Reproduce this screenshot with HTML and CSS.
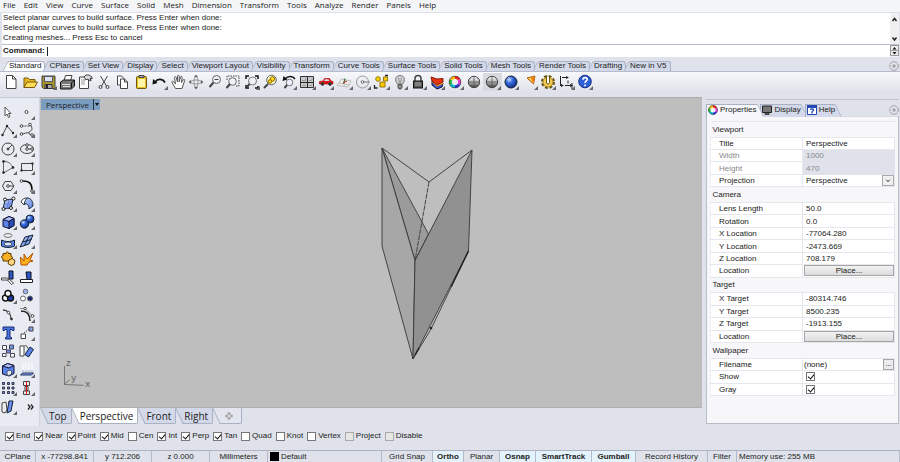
FILE: index.html
```html
<!DOCTYPE html>
<html lang="en">
<head>
<meta charset="utf-8">
<title>Modeling workspace</title>
<link rel="stylesheet" href="styles.css">
</head>
<body>
<svg class="defs" aria-hidden="true">
  <defs>
    <radialGradient id="blueBall" cx=".35" cy=".3" r=".8"><stop offset="0" stop-color="#cfe0ff"/><stop offset=".35" stop-color="#3b6fe0"/><stop offset="1" stop-color="#0a1f7a"/></radialGradient>
    <linearGradient id="grayBall" x2="0" y2="1"><stop offset="0" stop-color="#fff"/><stop offset=".5" stop-color="#b5b5b5"/><stop offset="1" stop-color="#3a3a3a"/></linearGradient>
    <linearGradient id="blueFace" x2="1" y2="1"><stop offset="0" stop-color="#c8d6fb"/><stop offset="1" stop-color="#4f77dd"/></linearGradient>
  </defs>
  <symbol id="wheel" viewBox="0 0 14 14">
    <g fill="none" stroke-width="3">
      <path stroke="#e22" d="M7 2a5 5 0 0 1 4.3 2.5"/><path stroke="#e3c" d="M11.3 4.5a5 5 0 0 1 0 5"/><path stroke="#33d" d="M11.3 9.5A5 5 0 0 1 7 12"/><path stroke="#0bc" d="M7 12a5 5 0 0 1-4.3-2.5"/><path stroke="#2b3" d="M2.700 9.5a5 5 0 0 1 0-5"/><path stroke="#fb0" d="M2.700 4.5A5 5 0 0 1 7 2"/>
    </g>
    <circle cx="7" cy="7" r="6.4" fill="none" stroke="#222" stroke-width=".7"/>
  </symbol>
  <symbol id="options" viewBox="0 0 10 10"><g fill="none" stroke="#888"><circle cx="5" cy="5" r="4.300" stroke-width=".9" stroke-dasharray="2.400 .6"/><path d="M5 3v4M3 5h4" stroke-width=".8"/></g></symbol>
</svg>

<nav class="menu" aria-label="Main menu">
  <a href="#">File</a><a href="#">Edit</a><a href="#">View</a><a href="#">Curve</a><a href="#">Surface</a><a href="#">Solid</a><a href="#">Mesh</a><a href="#">Dimension</a><a href="#">Transform</a><a href="#">Tools</a><a href="#">Analyze</a><a href="#">Render</a><a href="#">Panels</a><a href="#">Help</a>
</nav>

<section class="console">
  <div class="history">
    <div>
      <p>Select planar curves to build surface. Press Enter when done:</p>
      <p>Select planar curves to build surface. Press Enter when done:</p>
      <p>Creating meshes... Press Esc to cancel</p>
    </div>
    <div class="scroll"><svg viewBox="0 0 9 31"><path d="M2.500 8l2-2.500 2 2.500M2.500 24.500l2 2.500 2-2.500"/></svg></div>
  </div>
  <div class="prompt">
    <label for="command">Command:</label>
    <span class="caret"></span>
    <input id="command" type="text">
    <div class="scroll"><svg viewBox="0 0 9 12"><path d="M.5.500h8v5h-8zM.5 5.500h8v5h-8z" stroke="#999" fill="#eee" stroke-width="1"/><path d="M2.500 4.500l2-2.500 2 2.500zM2.500 7l2 2.500 2-2.500z" fill="#111" stroke="none"/></svg></div>
  </div>
</section>

<div class="tabrow">
  <div class="tabs">
    <button class="tab on">Standard</button><button class="tab">CPlanes</button><button class="tab">Set View</button><button class="tab">Display</button><button class="tab">Select</button><button class="tab">Viewport Layout</button><button class="tab">Visibility</button><button class="tab">Transform</button><button class="tab">Curve Tools</button><button class="tab">Surface Tools</button><button class="tab">Solid Tools</button><button class="tab">Mesh Tools</button><button class="tab">Render Tools</button><button class="tab">Drafting</button><button class="tab">New in V5</button>
  </div>
  <button class="opt" aria-label="Toolbar options"><svg><use href="#options"/></svg></button>
</div>

<div class="toolbar">
  <div class="tools">
    <button class="tool" aria-label="New"><svg viewBox="0 0 18 18"><path fill="#fff" d="M4.500 2.500h6L14 6v9.500H4.500z"/><path d="M10.500 2.500V6H14"/></svg></button>
    <button class="tool" aria-label="Open"><svg viewBox="0 0 18 18"><path fill="#e8b820" stroke="#76590a" d="M3 14.500V5h4l1.500 1.500H14V9"/><path fill="#ffdc55" stroke="#76590a" d="M3 14.500L6 9h10.500l-3 5.500z"/></svg></button>
    <button class="tool fly" aria-label="Save"><svg viewBox="0 0 18 18"><path fill="#a8952f" d="M3 3h13v12.500H4.500L3 14z"/><path fill="#dfe4f3" stroke="#556" d="M5.500 3.500h8v5h-8z"/><path fill="#aaa" stroke="#333" d="M6 11.500h7v4H6z"/><path d="M8 12v3" stroke="#222" stroke-width="2"/></svg></button>
    <button class="tool" aria-label="Print"><svg viewBox="0 0 18 18"><path fill="#fff" d="M6 8l1.500-5.500H14L12.500 8z"/><path fill="#777" stroke="#111" d="M2.500 9l3-2h11v6l-3 3h-11z"/><path stroke="#ddd" d="M4 11.500h8M5 13.500h7"/><path d="M13.500 15V10l3-3" stroke="#111"/></svg></button>
    <button class="tool" aria-label="Document properties"><svg viewBox="0 0 18 18"><path fill="#fff" d="M3.500 4h9v11.500h-9z"/><path d="M5 7h5M5 9h4M5 11h4" stroke="#999"/><path fill="#ddd" d="M8 4l2-2h3l3 2v2l-2-1 1 3-4-2-1 1z"/></svg></button>
    <button class="tool" aria-label="Cut"><svg viewBox="0 0 18 18"><path d="M5.500 3l6 10M12.500 3l-6 10"/><circle cx="5.500" cy="14" r="1.500"/><circle cx="12.500" cy="14" r="1.500"/></svg></button>
    <button class="tool" aria-label="Copy"><svg viewBox="0 0 18 18"><path fill="#fff" d="M4.500 3h4L11 5.500V12H4.500z"/><path fill="#fff" d="M7.500 6h4L14.500 9v6.500h-7z"/><path d="M11.500 6v3h3"/></svg></button>
    <button class="tool" aria-label="Paste"><svg viewBox="0 0 18 18"><rect x="4.500" y="3.500" width="10" height="12" rx="1" fill="#e9bd22" stroke="#6d5a10"/><path fill="#fff6a8" stroke="none" d="M6 6h7v8H6z"/><path fill="#aaa" d="M7 2.500h5v2H7z"/></svg></button>
    <button class="tool fly" aria-label="Undo"><svg viewBox="0 0 18 18"><path d="M5 9c3-4 8-3 10 .5" stroke="#111" stroke-width="1.800"/><path fill="#111" stroke="none" d="M2.500 11.500l.5-5.500 4.500 4z"/></svg></button>
    <button class="tool" aria-label="Pan"><svg viewBox="0 0 18 18"><path fill="#fff" stroke="#555" d="M6.500 15.500L3 9.500c-.5-1 .8-1.800 1.800-.5L6.500 11 5.500 4.500c0-1.200 1.500-1.200 1.800 0L8.500 9V3.200c0-1.200 1.600-1.200 1.700 0V9l1.300-5c.4-1.200 1.800-.8 1.600.4L12.500 9.500l1.700-2.700c.7-.9 1.800-.3 1.500.7L13 15.500z"/></svg></button>
    <button class="tool" aria-label="Rotate view"><svg viewBox="0 0 18 18"><ellipse cx="9" cy="9" rx="5.500" ry="2" stroke="#999"/><ellipse cx="9" cy="9" rx="2" ry="5.500" stroke="#999"/><path fill="#666" stroke="none" d="M9 1.500l2 2.500H7zM9 16.500l2-2.500H7zM1.500 9L4 7v4zM16.500 9L14 7v4z"/></svg></button>
    <button class="tool" aria-label="Zoom"><svg viewBox="0 0 18 18"><circle cx="10.500" cy="6.500" r="4" fill="#edf2fb" stroke="#666"/><path d="M8.500 6.500h4" /><path d="M7.500 9.500L3.500 14" stroke-width="2"/></svg></button>
    <button class="tool" aria-label="Zoom window"><svg viewBox="0 0 18 18"><path d="M3 7V3h12v10h-3" stroke-dasharray="1.500 1"/><circle cx="8.500" cy="8.500" r="3.800" fill="#edf2fb" stroke="#666"/><path d="M6 11l-3.500 4" stroke-width="2"/></svg></button>
    <button class="tool fly" aria-label="Zoom extents"><svg viewBox="0 0 18 18"><path d="M3 6V3h3M12 3h3v3M3 12v3h3M12 15h3v-2" stroke="#111" stroke-width="1.500"/><circle cx="9.500" cy="8" r="4" fill="#edf2fb" stroke="#777"/><path d="M6.500 11L4 14" stroke-width="2"/></svg></button>
    <button class="tool" aria-label="Zoom selected"><svg viewBox="0 0 18 18"><circle cx="10.500" cy="7" r="4.800" fill="#f4f0c8" stroke="#666"/><circle cx="11.500" cy="6" r="2.200" fill="#ffd915" stroke="#987500"/><circle cx="9" cy="8.500" r="1.800" fill="#ffd915" stroke="#987500"/><path d="M7 11l-4 4" stroke-width="2"/></svg></button>
    <button class="tool fly" aria-label="Undo view"><svg viewBox="0 0 18 18"><path d="M5 6c3-3.500 8-3 10 0" stroke="#111" stroke-width="1.500"/><path fill="#111" stroke="none" d="M2.500 8l1-5 4 3.500z"/><circle cx="9.500" cy="9.500" r="3.300" fill="#eef" stroke="#777"/><path d="M7 12l-2.500 3" stroke-width="2"/></svg></button>
    <button class="tool fly" aria-label="Four viewports"><svg viewBox="0 0 18 18"><path fill="#ccc" stroke="#333" d="M2.500 3.500h13v11h-13z"/><path stroke="#222" d="M9.500 3.500v11M2.500 9.500h13"/><path d="M4 7.500h3.500V5M11 7.500h3V5M4 12.500h3.500v-1M11 12.500h3v-1" stroke="#999"/></svg></button>
    <button class="tool fly" aria-label="Right view"><svg viewBox="0 0 18 18"><path fill="#e31616" stroke="#a00" stroke-width=".6" d="M2.500 11V8.500L6 8l1.500-2.500h5L14 8l2 .5V11z"/><path fill="#cde" stroke="none" d="M7 8l1-1.700h3.500l.8 1.700z"/><circle cx="5.500" cy="11" r="1.400" fill="#222"/><circle cx="13" cy="11" r="1.400" fill="#222"/></svg></button>
    <button class="tool fly" aria-label="Construction plane"><svg viewBox="0 0 18 18"><path fill="#eee" stroke="#bbb" d="M2 12.500L6.500 6l9.500 2-3 6zM4 10l10 2M10 7l-1 6.500"/><path d="M8.500 10.500L10 5.500" stroke="#161"/><path d="M8 10l4-2" stroke="#c22"/></svg></button>
    <button class="tool fly" aria-label="Circle plane"><svg viewBox="0 0 18 18"><circle cx="8.500" cy="9" r="6" stroke="#999"/><path d="M8.500 9h7" stroke="#777"/><circle cx="8.500" cy="9" r="1.300" fill="#fff" stroke="#666"/></svg></button>
    <button class="tool fly" aria-label="Select objects"><svg viewBox="0 0 18 18"><circle cx="6" cy="6" r="2.300" fill="#ffd800" stroke="#96780a"/><path fill="#ffc800" stroke="#96780a" d="M8 9h5v5H8zM11.500 4h4v4h-4z"/><path d="M2.500 12v3h3M13 2.500h3" stroke="#222" stroke-width="1.300"/></svg></button>
    <button class="tool fly" aria-label="Hide"><svg viewBox="0 0 18 18"><path fill="#ccc" stroke="#777" d="M6.500 11C3 7 4.500 2.500 9 2.500s6 4.500 2.500 8.500z"/><path fill="#888" stroke="#555" d="M7 11.500h4v3L10 16H8l-1-1.500z"/><path d="M7.500 5.500l1.500 5 1.500-5" stroke="#999"/></svg></button>
    <button class="tool fly" aria-label="Lock"><svg viewBox="0 0 18 18"><path d="M6 8V5.500a3 3 0 0 1 6 0V8" stroke-width="1.500"/><rect x="4.500" y="8" width="9" height="7" fill="#555" stroke="#111"/><path d="M6 10h6M6 12h6" stroke="#aaa"/></svg></button>
    <button class="tool fly" aria-label="Render layer"><svg viewBox="0 0 18 18"><path fill="#3a56c8" stroke="#113" d="M4 8l5 5 6-3-1 4-5 2-5-4z"/><path fill="#ffab28" stroke="none" d="M3.500 7L9 12l6-3v2l-6 2.500L4 9z"/><path fill="#e8340f" stroke="#8b1c06" d="M3 4l6 2 6-.5V9l-6 3-5-4z"/></svg></button>
    <button class="tool fly" aria-label="Object color"><svg viewBox="0 0 18 18"><use href="#wheel" x="2.500" y="2.500" width="13" height="13"/></svg></button>
    <button class="tool" aria-label="Shade"><svg viewBox="0 0 18 18"><circle cx="9" cy="9" r="5.700" fill="url(#grayBall)"/><path d="M3.500 9h11M9 3.500v11" stroke="#555" stroke-width=".8"/></svg></button>
    <button class="tool fly lit" aria-label="Shade all"><svg viewBox="0 0 18 18"><circle cx="9" cy="9" r="5.700" fill="url(#grayBall)"/><path d="M3.500 9h11M9 3.500v11" stroke="#555" stroke-width=".8"/></svg></button>
    <button class="tool fly" aria-label="Render"><svg viewBox="0 0 18 18"><circle cx="9" cy="9" r="6" fill="url(#blueBall)" stroke="#123"/></svg></button>
    <button class="tool fly" aria-label="Spotlight"><svg viewBox="0 0 18 18"><path fill="#ffc451" stroke="#a8620a" d="M7 5l8-2-1.500 8z"/><path fill="#ef7c16" stroke="none" d="M11 5l4-2-1.500 8z"/></svg></button>
    <button class="tool fly" aria-label="Options"><svg viewBox="0 0 18 18"><circle cx="9" cy="9" r="5.500" stroke="#67500d" stroke-width="3" stroke-dasharray="2.600 1.720"/><circle cx="9" cy="9" r="5" fill="#f1cc4e" stroke="#a5852a"/><path fill="#fff" stroke="#67500d" d="M7.500 4v5.500a1.500 1.500 0 0 0 3 0V4"/></svg></button>
    <button class="tool fly" aria-label="Dimension"><svg viewBox="0 0 18 18"><path d="M3.500 3v10M5 4.500h5.500M8 12.500h6M11 7.500v3M15 10v6" stroke="#222"/><path fill="#222" stroke="none" d="M9 3l3 1.500L9 6zM4 11l3 1.500L4 14zM13 11l3 1.500-3 1.500z"/></svg></button>
    <button class="tool fly" aria-label="Help"><svg viewBox="0 0 18 18"><circle cx="9" cy="8.500" r="6.300" fill="#2f5fd6" stroke="#14307f"/><path d="M7 6.800c0-3 4.500-2.800 4.200-.2C11 8 9 8 9 10M9 11.500v1.700" stroke="#fff" stroke-width="1.600"/></svg></button>
  </div>
</div>

<main>
  <aside class="palette">
    <button class="tool" aria-label="Pointer"><svg viewBox="0 0 18 18"><path fill="#fff" stroke="#555" d="M5 4v9l2-2 1.500 3.500 1.500-.8L8.500 10.500H11z"/></svg></button>
    <button class="tool fly" aria-label="Point"><svg viewBox="0 0 18 18"><circle cx="8.500" cy="9" r="1.500" fill="#fff"/></svg></button>
    <button class="tool fly" aria-label="Polyline"><svg viewBox="0 0 18 18"><path d="M2.500 14L7 5l6 7"/><g fill="#222" stroke="none"><circle cx="2.500" cy="14" r="1.200"/><circle cx="7" cy="5" r="1.200"/><circle cx="13" cy="12" r="1.200"/></g></svg></button>
    <button class="tool fly" aria-label="Curve"><svg viewBox="0 0 18 18"><path stroke-dasharray="2 1" d="M3.500 5h9"/><path d="M12.500 4c2 3 2 5 0 6s-3 3 1.500 4M3.500 13c3 0 5-2 8-1"/><g fill="#fff"><circle cx="3.500" cy="5" r="1.300"/><circle cx="12" cy="3.500" r="1.300"/><circle cx="3.500" cy="13" r="1.300"/><circle cx="14" cy="14" r="1.300"/></g></svg></button>
    <button class="tool fly" aria-label="Circle"><svg viewBox="0 0 18 18"><circle cx="8" cy="9" r="6"/><path d="M8 9l4-4"/><circle cx="8" cy="9" r="1" fill="#222"/></svg></button>
    <button class="tool fly" aria-label="Ellipse"><svg viewBox="0 0 18 18"><ellipse cx="9" cy="9" rx="6.500" ry="4.500"/><path d="M9 5v4h5"/><g fill="#fff"><circle cx="9" cy="5" r="1.300"/><circle cx="9" cy="9" r="1.300"/><circle cx="14" cy="9" r="1.300"/></g></svg></button>
    <button class="tool fly" aria-label="Arc"><svg viewBox="0 0 18 18"><path d="M3.500 15V3c5 .5 8 3 9.500 6.500z" stroke="#666"/><g fill="#222" stroke="none"><circle cx="3.500" cy="3.500" r="1.300"/><circle cx="3.500" cy="14.500" r="1.300"/><circle cx="13" cy="9.500" r="1.300"/></g></svg></button>
    <button class="tool fly" aria-label="Rectangle"><svg viewBox="0 0 18 18"><path d="M3.500 5.500h11v7h-11z"/><g fill="#222" stroke="none"><path d="M2.500 11.500h2v2h-2zM13.500 4.500h2v2h-2z"/></g></svg></button>
    <button class="tool fly" aria-label="Polygon"><svg viewBox="0 0 18 18"><path d="M5 4.500h6l3 4.500-3 4.500H5L2.500 9z"/><path d="M8 9h6"/><circle cx="8" cy="9" r="1.300" fill="#fff"/></svg></button>
    <button class="tool fly" aria-label="Fillet"><svg viewBox="0 0 18 18"><path d="M5 4c7 0 9 3 9 10" stroke="#111" stroke-width="1.700"/><circle cx="3.500" cy="4" r="1.300" fill="#fff"/><circle cx="14" cy="14" r="1.300" fill="#fff"/></svg></button>
    <button class="tool fly" aria-label="Surface from points"><svg viewBox="0 0 18 18"><path fill="url(#blueFace)" stroke="#123" d="M5 5l8-1-2 9-8 1z"/><path stroke="#6883d0" d="M9 4.500L7 14M4.500 9.500l8-1.500"/><g fill="#fff" stroke="#222"><circle cx="5" cy="4.500" r="1.500"/><circle cx="13.500" cy="3.500" r="1.500"/><circle cx="3.500" cy="14" r="1.500"/><circle cx="11" cy="13" r="1.500"/></g></svg></button>
    <button class="tool fly" aria-label="Loft"><svg viewBox="0 0 18 18"><path fill="#fff" d="M3 7c1-3 3-4 6-4l3 2-6 5z"/><path fill="url(#blueFace)" stroke="#234" d="M9 3c4 0 6 3 6 8l-4 3c0-4-2-6-5-5 1-3 2-5 3-6z"/></svg></button>
    <button class="tool fly" aria-label="Box"><svg viewBox="0 0 18 18"><path fill="#5b82ea" stroke="#113" d="M3 6.500l6-3 5 2v7l-5 3-6-2z"/><path fill="#a9bef9" stroke="#113" d="M3 6.500l6-3 5 2-5 3z"/><path fill="#2d51bc" stroke="#113" d="M9 8.500l5-3v7l-5 3z"/></svg></button>
    <button class="tool fly" aria-label="Boolean union"><svg viewBox="0 0 18 18"><circle cx="12" cy="6" r="4" fill="url(#blueBall)" stroke="#123"/><circle cx="6.500" cy="11" r="4.200" fill="url(#blueBall)" stroke="#123"/></svg></button>
    <button class="tool fly" aria-label="Project curve"><svg viewBox="0 0 18 18"><ellipse cx="8" cy="3.500" rx="4" ry="1.800" fill="#fff" stroke="#666"/><path fill="#5b82ea" stroke="#123" d="M1.500 8c4 2 9 2 13 0v6c-4 2-9 2-13 0z"/><ellipse cx="8" cy="12" rx="4" ry="2" fill="#dfe7ff" stroke="#345"/></svg></button>
    <button class="tool fly" aria-label="Mesh"><svg viewBox="0 0 18 18"><path fill="url(#blueFace)" stroke="#123" d="M7 5l8-2-4 9-9 3z"/><path stroke="#123" d="M11 4L6.500 13.500M4.500 10l9-2.500"/></svg></button>
    <button class="tool" aria-label="Join"><svg viewBox="0 0 18 18"><path fill="#f8b224" stroke="#5e3a00" d="M3 3.500h3c-.5-2 3-2 2.500 0H11v3c2-.5 2 3 0 2.500V11H3V8.500c-2 0-2-3 0-2.500z"/><path fill="#ffd780" stroke="#5e3a00" d="M9 10l3-1.500 3 2-1 4-3 1-3-2z"/></svg></button>
    <button class="tool" aria-label="Explode"><svg viewBox="0 0 18 18"><path fill="#ffae19" stroke="#b15300" d="M3 15l-.5-8 3.500 4V4l3 5 6-6-3 7 3 1-4 1-2 3z"/></svg></button>
    <button class="tool" aria-label="Trim"><svg viewBox="0 0 18 18"><path fill="#2e56c3" stroke="#112" d="M9 2h4v8H9z"/><path fill="#fff" d="M1.500 9h6l1.500 2H1.500z"/><path fill="#fff" d="M9 10l4.500 4-2 1.500-4-4.500z"/></svg></button>
    <button class="tool" aria-label="Split"><svg viewBox="0 0 18 18"><path fill="#fff" stroke="#222" d="M2.500 10.500h12v3h-12z"/><path fill="#2e56c3" stroke="#112" d="M8 3h5v7.500H9z"/></svg></button>
    <button class="tool fly" aria-label="Group"><svg viewBox="0 0 18 18"><g fill="#fff" stroke="#111" stroke-width="1.400"><circle cx="5.500" cy="11" r="3"/><circle cx="10.500" cy="11" r="3" fill="#233ba6"/><circle cx="8" cy="6.500" r="3"/></g></svg></button>
    <button class="tool" aria-label="Ungroup"><svg viewBox="0 0 18 18"><g stroke="#666"><circle cx="7.500" cy="4.500" r="2.300" fill="#9bb2f5"/><circle cx="5" cy="11.500" r="2.500" fill="#fff"/><circle cx="12" cy="11.500" r="2.500" fill="#15246b"/></g></svg></button>
    <button class="tool" aria-label="Edit points"><svg viewBox="0 0 18 18"><path d="M3 4c5 0 8 4 8 9" stroke-width="1.300"/><circle cx="8.500" cy="6.500" r="1.300" fill="#fff"/><circle cx="11.500" cy="13" r="1" fill="#222"/></svg></button>
    <button class="tool fly" aria-label="Control points"><svg viewBox="0 0 18 18"><path d="M3 5c6 0 9 4 9 10" stroke-width="1.500" stroke="#222"/><path stroke="#888" d="M2 2.500h5l7 7"/><circle cx="7" cy="2.500" r="1.200" fill="#fff"/><circle cx="14.500" cy="10" r="1.400" fill="#fff"/></svg></button>
    <button class="tool" aria-label="Text"><svg viewBox="0 0 18 18"><path fill="#4c75df" stroke="#142a73" d="M3 3h11v3.500h-1.500L12 5.500h-2V13l1.500.5V15h-6v-1.500L7 13V5.500H5l-.5 1H3z"/></svg></button>
    <button class="tool fly" aria-label="Move"><svg viewBox="0 0 18 18"><path fill="#fff" d="M3 10h4.500v4.500H3z"/><path fill="#8aa5ee" d="M11 3h4v4h-4z"/><path stroke-dasharray="1.500 1" d="M6 9l5-4"/></svg></button>
    <button class="tool" aria-label="Copy objects"><svg viewBox="0 0 18 18"><g fill="#fff" stroke="#445"><path d="M2.500 3.500h4v4h-4zM2.500 11.500h3.500v3H2.500z"/><path fill="#7292e8" d="M9.500 3h4v4h-4zM6.500 8h4v3h-4z"/><path d="M10.500 11.500h4v3.500h-4z"/></g></svg></button>
    <button class="tool" aria-label="Rotate"><svg viewBox="0 0 18 18"><path fill="#fff" d="M2 4h4v10H2z"/><path d="M6.500 3.500c2 0 3 1 3.500 3"/><path fill="#5b82ea" stroke="#123" d="M12 5l3.500 2.500-5 7.500L7 12.500z"/></svg></button>
    <button class="tool fly" aria-label="Solid edit"><svg viewBox="0 0 18 18"><path fill="#5b82ea" stroke="#113" d="M2.500 5l5-2.500 6.500 2v8L9 15l-6.500-2z"/><path fill="#a9bef9" stroke="#113" d="M2.500 5l5-2.500 6.500 2L9 7z"/><path fill="#eee" stroke="#456" d="M7 14v-3.500l3-1.500 1.500 1V13L9 14.500z"/></svg></button>
    <button class="tool fly" aria-label="Project down"><svg viewBox="0 0 18 18"><path stroke="#fff" d="M5 2v9M8 2v9M11 2v9M14 2v9"/><path stroke="#9ab" d="M5 9v2M8 9v2M11 9v2M14 9v2"/><path fill="#8aa5ee" stroke="#236" d="M2.500 14l2-2h11l-2 2z"/></svg></button>
    <button class="tool fly" aria-label="Array"><svg viewBox="0 0 18 18"><g fill="#7292e8" stroke="#334"><path d="M2.500 3.500h2v2h-2zM7.500 3.500h2v2h-2zM12 3.500h2v2h-2zM2.500 8h2v2h-2zM7.500 8h2v2h-2zM12 8h2v2h-2zM2.500 12.500h2v2h-2zM7.500 12.500h2v2h-2zM12 12.500h2v2h-2z"/></g></svg></button>
    <button class="tool fly" aria-label="Align"><svg viewBox="0 0 18 18"><path fill="#eee" d="M5.500 2.500h6v4h-6zM7 7.500h3v4H7zM5.500 12h6v3.500h-6z"/><path d="M8.500 2v14" stroke="#d11"/></svg></button>
    <button class="tool fly" aria-label="Flow"><svg viewBox="0 0 18 18"><path fill="#eee" d="M2 5l4-1 1 8-2 3-3-1z"/><path fill="#6b8cec" stroke="#123" d="M9 3h4l-2 10-4 2z"/></svg></button>
    <button class="tool" aria-label="More tools"><svg viewBox="0 0 18 18"><path d="M10 6.500l2 2.500-2 2.500M13 6.500L15 9l-2 2.500" stroke="#222" stroke-width="1.300"/></svg></button>
  </aside>

  <section class="workspace">
    <div class="viewport">
      <button class="vtitle"><span>Perspective</span><i></i></button>
      <svg class="scene" viewBox="0 1 662 309" role="img" aria-label="Perspective view">
        <g stroke="#383838" stroke-width=".9" stroke-linejoin="round">
          <path fill="#9b9b9b" d="M342 51L388.500 137 375 163.500z"/>
          <path fill="#a7a7a7" d="M342 51v98l31 113 2-98.500z"/>
          <path fill="#919191" d="M432 53l-3.500 101L373 262l2-98.500z"/>
          <path fill="none" d="M342 51l47 34 43-32M428.500 154L391 232l-18 30"/>
          <path fill="none" d="M389 85l-14 78.500" stroke-dasharray="5 1"/>
          <path fill="none" d="M428.500 154L411 190M375 258l4-7" stroke-width="1.400" stroke="#222"/>
        </g>
        <circle cx="391" cy="231" r="1.300" fill="#222"/>
        <path d="M24.500 269v18.500l19 .8M24.500 287l5-4" fill="none" stroke="#777"/>
        <g class="axis"><text x="26" y="269">z</text><text x="31" y="284">y</text><text x="45" y="290">x</text></g>
      </svg>
    </div>
    <div class="viewtabs">
      <button class="vtab">Top</button><button class="vtab on">Perspective</button><button class="vtab">Front</button><button class="vtab">Right</button><button class="vtab plus" aria-label="New viewport"><svg viewBox="0 0 8 8"><path d="M4 .5v7M.5 4h7" stroke="#888" stroke-width="2.500"/><path d="M4 1.500v5M1.500 4h5" stroke="#eee"/></svg></button>
    </div>
  </section>

  <section class="side">
    <div class="ptabs">
      <button class="ptab on"><svg><use href="#wheel"/></svg>Properties</button>
      <button class="ptab"><svg viewBox="0 0 10 10"><path fill="#777" stroke="#222" d="M.5 1h9v6.500h-9z"/><path d="M2.500 9h5" stroke="#222" stroke-width="1.500"/></svg>Display</button>
      <button class="ptab"><svg viewBox="0 0 10 10"><path fill="#fff" stroke="#2448b8" d="M.5.500h9v9h-9z"/><path fill="#2448b8" d="M0 0h10v3H0z"/><path fill="none" stroke="#2448b8" stroke-width="1.300" d="M3.500 5c0-1.500 3-1.500 3 0 0 1-1.500 1-1.500 2v1.500"/></svg>Help</button>
      <button class="opt" aria-label="Panel options"><svg><use href="#options"/></svg></button>
    </div>
    <div class="panel">
      <table>
        <tr class="sec"><th colspan="2">Viewport</th></tr>
        <tr><th>Title</th><td>Perspective</td></tr>
        <tr class="off"><th>Width</th><td>1000</td></tr>
        <tr class="off"><th>Height</th><td>470</td></tr>
        <tr><th><label for="projection">Projection</label></th><td class="field"><div class="pick"><select id="projection"><option>Perspective</option></select><svg viewBox="0 0 12 12"><path d="M3.500 5L6 7.500 8.500 5" fill="none" stroke="#222" stroke-width="1.300"/></svg></div></td></tr>
        <tr class="sec"><th colspan="2">Camera</th></tr>
        <tr><th>Lens Length</th><td>50.0</td></tr>
        <tr><th>Rotation</th><td>0.0</td></tr>
        <tr><th>X Location</th><td>-77064.280</td></tr>
        <tr><th>Y Location</th><td>-2473.669</td></tr>
        <tr><th>Z Location</th><td>708.179</td></tr>
        <tr><th>Location</th><td class="field"><button class="place">Place...</button></td></tr>
        <tr class="sec"><th colspan="2">Target</th></tr>
        <tr><th>X Target</th><td>-80314.746</td></tr>
        <tr><th>Y Target</th><td>8500.235</td></tr>
        <tr><th>Z Target</th><td>-1913.155</td></tr>
        <tr><th>Location</th><td class="field"><button class="place">Place...</button></td></tr>
        <tr class="sec"><th colspan="2">Wallpaper</th></tr>
        <tr><th>Filename</th><td class="field"><div class="file"><span>(none)</span><button>...</button></div></td></tr>
        <tr><th><label for="show">Show</label></th><td><input id="show" type="checkbox" checked></td></tr>
        <tr><th><label for="gray">Gray</label></th><td><input id="gray" type="checkbox" checked></td></tr>
      </table>
    </div>
  </section>
</main>

<div class="snaps">
  <label><input type="checkbox" checked>End</label><label><input type="checkbox" checked>Near</label><label><input type="checkbox" checked>Point</label><label><input type="checkbox" checked>Mid</label><label><input type="checkbox">Cen</label><label><input type="checkbox" checked>Int</label><label><input type="checkbox" checked>Perp</label><label><input type="checkbox" checked>Tan</label><label><input type="checkbox">Quad</label><label><input type="checkbox">Knot</label><label><input type="checkbox">Vertex</label><label><input type="checkbox" class="dim">Project</label><label><input type="checkbox" class="dim">Disable</label>
</div>

<footer class="status">
  <span class="w35">CPlane</span><span class="w58">x -77298.841</span><span class="w58">y 712.206</span><span class="w58">z 0.000</span><span class="w58">Millimeters</span><span class="layer"><i></i>Default</span>
  <button class="w51">Grid Snap</button><button class="w31 on">Ortho</button><button class="w36">Planar</button><button class="w36 on">Osnap</button><button class="w56 on">SmartTrack</button><button class="w44 on">Gumball</button><button class="w72">Record History</button><button class="w29">Filter</button><span class="mem">Memory use: 255 MB</span>
</footer>
</body>
</html>
```
FILE: styles.css
```css
* { box-sizing: border-box; }
body {
  margin: 0;
  min-height: 100vh;
  display: flex;
  flex-direction: column;
  background: #dfe2ea;
  color: #222;
  font: 8px/12px "Liberation Sans", sans-serif;
}
button { font: inherit; color: inherit; border: 0; background: none; padding: 0; margin: 0; }
p { margin: 0; }
svg { display: block; }
.defs { position: absolute; width: 0; height: 0; }

.menu {
  display: flex;
  gap: 8px;
  height: 13px;
  padding: 0 3px;
  background: #f4f5f7;
  border-bottom: 1px solid #dcdfe7;
  font: 8px/10px "Open Sans", sans-serif;
}
.menu a { color: #222; text-decoration: none; }

.console { padding: 0 1px 0 2px; line-height: 10px; }
.history, .prompt { display: flex; background: #fff; padding-left: 1px; }
.history { justify-content: space-between; height: 32px; border-bottom: 1px solid #b8bdcc; }
.prompt { align-items: center; height: 12px; font-weight: bold; }
.prompt input { flex: 1; min-width: 0; height: 10px; border: 0; padding: 0; outline: 0; background: none; font: inherit; }
.caret { width: 1px; height: 9px; margin-left: 2px; background: #222; }
.scroll { width: 9px; background: #f0f0f0; }
.scroll svg { width: 9px; height: 100%; fill: none; stroke: #222; stroke-width: 1.5; }

.tabrow { display: flex; justify-content: space-between; align-items: flex-end; height: 15px; border-bottom: 1px solid #b4bbcc; padding: 0 1px 0 5px; }
.tabs { display: flex; }
.tab { position: relative; z-index: 0; height: 10px; line-height: 10px; padding: 0 4px; white-space: nowrap; }
.tab::before, .tab::after, .vtab::before, .vtab::after, .ptab::before, .ptab::after {
  content: "";
  position: absolute;
  z-index: -1;
  top: 0;
  bottom: 0;
  background: #d3d9e8;
  border: 0 solid #a9b1c4;
}
.tab::before { left: 0; right: 50%; border-width: 1px 0 0 1px; transform: skewX(-25deg); border-top-left-radius: 3px; }
.tab::after { left: 40%; right: 0; border-width: 1px 1px 0 0; border-top-right-radius: 3px; }
.tab.on::before, .tab.on::after { background: #fbfcfe; }
.opt { flex: none; margin-left: auto; }
.opt svg { width: 10px; height: 10px; }

.toolbar { height: 25px; padding: 1px 2px; background: linear-gradient(#f7f8fa, #dfe2ea 80%); }
.tools { display: grid; grid-template-columns: repeat(32, 1fr); max-width: 592px; }
.tool { position: relative; height: 18px; }
.tool svg { width: 18px; height: 18px; fill: none; stroke: #444; }
.tool.fly::after {
  content: "";
  position: absolute;
  right: 1px;
  bottom: 1px;
  border: 2px solid #666;
  border-top-color: transparent;
  border-left-color: transparent;
}
.lit { background: #d6d9df; }

main { flex: 1; display: grid; grid-template-columns: 40px 1fr 198px; }
.palette {
  display: grid;
  grid-template-columns: 18px 18px;
  grid-auto-rows: 1fr;
  padding: 5px 0 10px;
  background: #e9ebf2;
  border-right: 1px solid #d0d4df;
  border-top: 1px solid #c3c8d5;
}

.workspace { display: flex; flex-direction: column; min-width: 0; }
.viewport { position: relative; flex: 1; background: #bebebe; border-top: 1px solid #aaa; border-bottom: 1px solid #aeb1b8; }
.scene { position: absolute; inset: 0; width: 100%; height: 100%; }
.axis { font: 9px "DejaVu Sans", sans-serif; fill: #666; }
.vtitle {
  position: absolute;
  z-index: 1;
  top: 1px;
  left: 1px;
  display: flex;
  align-items: center;
  height: 11px;
  background: #7b9dc0;
  font: 8px/11px "Open Sans", sans-serif;
}
.vtitle span { padding: 0 4px 0 5px; border-right: 1px solid #234; }
.vtitle i { margin: 1px; border: 2px solid transparent; border-top: 3px solid #111; border-bottom: 0; }

.viewtabs { display: flex; height: 18px; padding: 0 1px; font: 10px/16px "Open Sans", sans-serif; }
.vtab { position: relative; z-index: 0; height: 16px; padding: 0 5px 0 8px; }
.vtab::before { left: 3px; right: 50%; border-width: 0 0 1px 1px; transform: skewX(25deg); }
.vtab::after { left: 40%; right: 0; border-width: 0 1px 1px 0; border-bottom-right-radius: 2px; }
.vtab.on::before, .vtab.on::after { background: #fff; }
.plus svg { width: 8px; height: 8px; margin: 0 4px; }
.plus::before, .plus::after { background: #e3e6ee; }

.side { display: flex; flex-direction: column; margin-left: 4px; padding: 2px 1px 2px 0; }
.ptabs { display: flex; align-items: center; height: 17px; padding-top: 4px; border-top: 1px solid #c0c5d0; }
.ptab { position: relative; z-index: 0; display: flex; align-items: center; gap: 2px; height: 13px; padding: 0 4px 0 2px; }
.ptab svg { width: 10px; height: 10px; }
.ptab::before { left: 0; right: 50%; border-width: 1px 0 0 1px; }
.ptab::after { left: 40%; right: 0; border-width: 1px 1px 0 0; transform: skewX(25deg); border-top-right-radius: 2px; }
.ptab.on::before, .ptab.on::after { background: #f7f7fa; }
.ptab.on { z-index: 1; }
.panel { flex: 1; background: #f7f7fa; border: 1px solid #b8bdc9; border-top-color: #d8dbe3; padding: 4px 3px; }
table { width: 100%; height: 275px; border-collapse: collapse; table-layout: fixed; }
tr { height: 12px; background: #fff; }
th, td { padding: 0 3px; font-weight: normal; text-align: left; line-height: 11px; border: 1px solid #e6e7ec; white-space: nowrap; }
th { padding-left: 8px; border-left-color: #f1f1f5; }
.sec { height: 15px; background: #f7f7fa; }
.sec th { padding-left: 2px; border-left: 0; border-right: 0; }
.off { color: #888; }
.off td { background: #dfe2ea; border-color: #dfe2ea; }
.field { padding: 0 0 0 1px; }
.pick { position: relative; height: 11px; }
.pick select { width: 100%; height: 11px; appearance: none; border: 0; background: none; padding: 0 0 0 2px; font: inherit; line-height: 11px; color: inherit; display: block; }
.pick svg { position: absolute; right: 0; top: 0; width: 12px; height: 11px; background: #f0f0f0; border: 1px solid #aaa; pointer-events: none; }
.place { display: block; width: 100%; height: 11px; line-height: 9px; border: 1px solid #a5a5a5; background: linear-gradient(#f2f2f2, #dcdcdc); }
.file { display: flex; justify-content: space-between; height: 11px; }
.file button { width: 11px; height: 11px; line-height: 6px; border: 1px solid #a5a5a5; background: #ececec; }

input[type="checkbox"] { appearance: none; flex: none; display: block; width: 9px; height: 9px; margin: 0; border: 1px solid #777; background: #fff; position: relative; }
input[type="checkbox"]:checked::after {
  content: "";
  position: absolute;
  left: 2px;
  top: 0;
  width: 3px;
  height: 5px;
  border: solid #111;
  border-width: 0 1px 1px 0;
  transform: rotate(40deg);
}
input.dim { background: #e6e6e6; border-color: #aaa; }

.snaps { display: flex; align-items: center; gap: 4px; height: 24px; padding: 0 5px 4px; }
.snaps label { display: flex; align-items: center; gap: 2px; white-space: nowrap; }

.status { display: flex; height: 12px; border-top: 1px solid #adb3c0; line-height: 12px; white-space: nowrap; }
.status > * { flex: none; border-right: 1px solid #b4bac8; text-align: center; height: 11px; }
.status .on { background: #e4f3fb; font-weight: bold; }
.w29 { width: 29px; } .w31 { width: 31px; } .w35 { width: 36px; } .w36 { width: 36px; } .w44 { width: 44px; }
.w51 { width: 51px; } .w56 { width: 56px; } .w58 { width: 58px; } .w72 { width: 72px; }
.status .layer { flex: 0 1 114px; display: flex; gap: 2px; padding-left: 2px; }
.layer i { width: 9px; height: 9px; margin-top: 1px; background: #000; }
.status .mem { flex: 1; text-align: left; padding-left: 2px; }
```
